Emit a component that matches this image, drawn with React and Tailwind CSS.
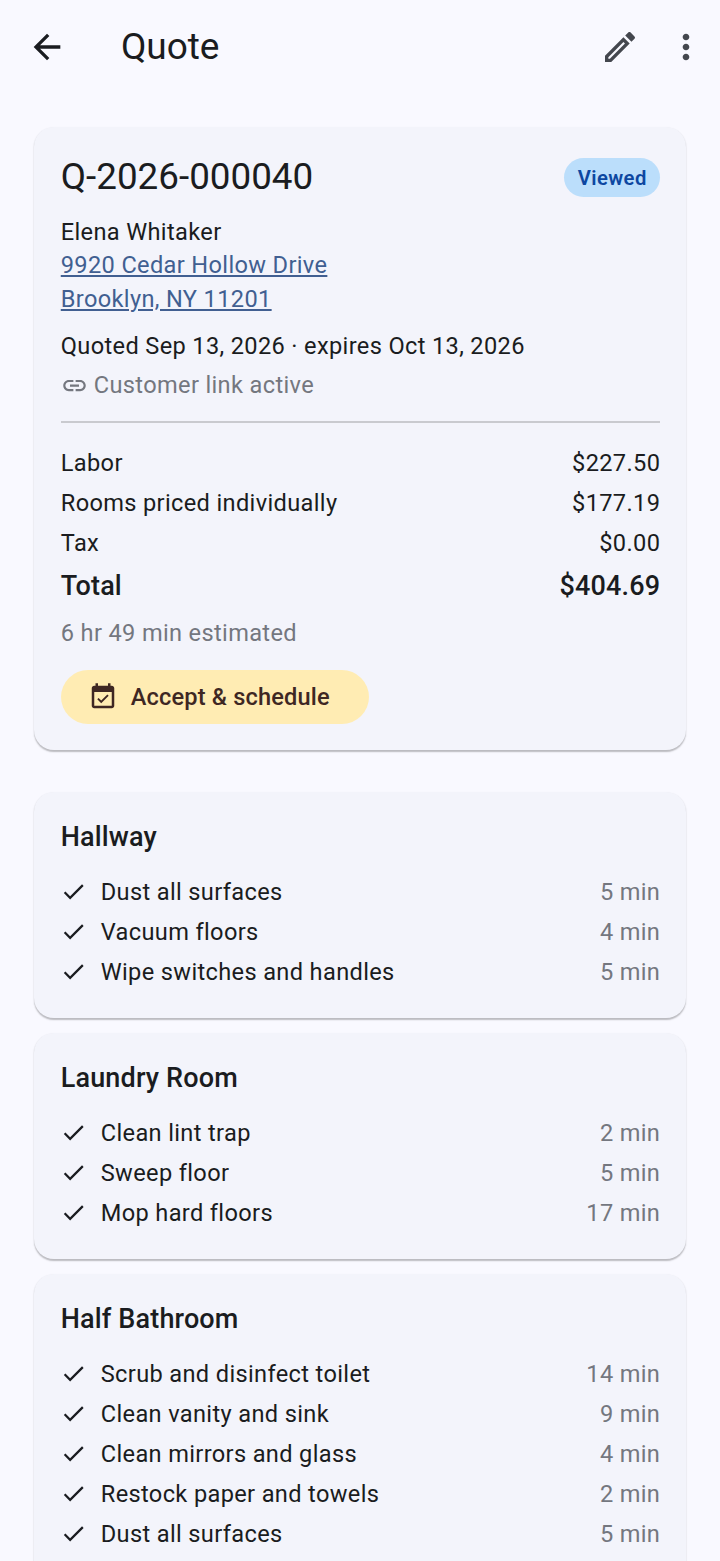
import React from 'react';
import { MdArrowBack, MdCheck, MdLink, MdMoreVert, MdOutlineEdit } from 'react-icons/md';

const rooms = [
  { name: 'Hallway', tasks: [['Dust all surfaces', '5 min'], ['Vacuum floors', '4 min'], ['Wipe switches and handles', '5 min']] },
  { name: 'Laundry Room', tasks: [['Clean lint trap', '2 min'], ['Sweep floor', '5 min'], ['Mop hard floors', '17 min']] },
  {
    name: 'Half Bathroom',
    tasks: [
      ['Scrub and disinfect toilet', '14 min'],
      ['Clean vanity and sink', '9 min'],
      ['Clean mirrors and glass', '4 min'],
      ['Restock paper and towels', '2 min'],
      ['Dust all surfaces', '5 min'],
    ],
  },
];

const cardClass = 'rounded-[20px] bg-[#f3f4fb] shadow-[0_1.5px_1.5px_rgba(0,0,0,0.25)]';

const CalendarCheck = () => (
  <svg width="30" height="30" viewBox="0 0 24 24" fill="currentColor" className="mr-[13px]">
    <path d="M16.53 11.06L15.47 10l-4.88 4.88-2.12-2.12-1.06 1.06L10.59 17l5.94-5.94zM19 3h-1V1h-2v2H8V1H6v2H5c-1.11 0-1.99.9-1.99 2L3 19c0 1.1.89 2 2 2h14c1.1 0 2-.9 2-2V5c0-1.1-.9-2-2-2zm0 16H5V8h14v11z" />
  </svg>
);

const PriceRow = ({ label, value }) => (
  <div className="flex h-[40px] items-center justify-between">
    <span>{label}</span>
    <span>{value}</span>
  </div>
);

const RoomCard = ({ room }) => (
  <div className={`${cardClass} pt-[27px] pr-[26px] pb-[26.5px] pl-[27px]`}>
    <h3 className="text-[27px] leading-[37px] font-medium tracking-[0.15px] text-[#1a1c20]">{room.name}</h3>
    <div className="mt-[15.5px]">
      {room.tasks.map((task, idx) => (
        <div key={idx} className="flex h-[40px] items-center">
          <MdCheck className="mr-[14px] ml-[-1px] text-[#1a1c20]" size={27} />
          <span className="flex-1 text-[#1a1c20]">{task[0]}</span>
          <span className="text-[#74777f]">{task[1]}</span>
        </div>
      ))}
    </div>
  </div>
);

export default function App() {
  return (
    <div
      className="h-[1561px] overflow-hidden bg-[#f9f9ff] text-[23.6px] leading-[34px] tracking-[0.35px] text-[#1a1c20]"
      style={{ fontFamily: 'Roboto, sans-serif' }}
    >
      <header className="flex h-[94px] items-center pr-[14px] pl-[27px]">
        <MdArrowBack size={40} className="text-[#1a1c20]" />
        <h1 className="mb-[2px] ml-[54px] flex-1 text-[37px] leading-[47px] tracking-[-0.1px]">Quote</h1>
        <MdOutlineEdit size={40} className="mr-[26px] text-[#44474e]" />
        <MdMoreVert size={40} className="text-[#44474e]" />
      </header>

      <main className="mt-[33px] px-[33.75px]">
        <section className={`${cardClass} pt-[28px] pr-[26px] pb-[26px] pl-[27px]`}>
          <div className="flex h-[44px] items-center justify-between">
            <h2 className="text-[36.8px] leading-[44px] tracking-normal">Q-2026-000040</h2>
            <span className="flex h-[39px] w-[96px] items-center justify-center rounded-full bg-[#bbdefb] pt-[1px] text-[20.25px] font-semibold tracking-[0.4px] text-[#0d47a1]">
              Viewed
            </span>
          </div>
          <div className="mt-[16px] mb-[-1px]">Elena Whitaker</div>
          <div className="text-[#415f91] underline">9920 Cedar Hollow Drive</div>
          <div className="text-[#415f91] underline">Brooklyn, NY 11201</div>
          <div className="mt-[13px]">Quoted Sep 13, 2026 · expires Oct 13, 2026</div>
          <div className="mt-[5px] flex h-[34px] items-center text-[#74777f]">
            <MdLink size={27} className="mr-[6px]" />
            Customer link active
          </div>
          <div className="mt-[19px] mb-[20px] h-[2px] bg-[#c9cacf]" />
          <PriceRow label="Labor" value="$227.50" />
          <PriceRow label="Rooms priced individually" value="$177.19" />
          <PriceRow label="Tax" value="$0.00" />
          <div className="flex h-[44px] items-center justify-between pt-[2px] text-[27px] font-medium tracking-[0.15px]">
            <span>Total</span>
            <span>$404.69</span>
          </div>
          <div className="mt-[9px] text-[#74777f]">6 hr 49 min estimated</div>
          <button className="mt-[20px] flex h-[54px] items-center rounded-full bg-[#ffecb3] pr-[39px] pl-[27px] font-medium tracking-[0.17px] text-[#3e2723]">
            <CalendarCheck />
            Accept &amp; schedule
          </button>
        </section>

        <div className="mt-[42px] flex flex-col gap-[15px]">
          {rooms.map((room) => (
            <RoomCard key={room.name} room={room} />
          ))}
        </div>
      </main>
    </div>
  );
}
